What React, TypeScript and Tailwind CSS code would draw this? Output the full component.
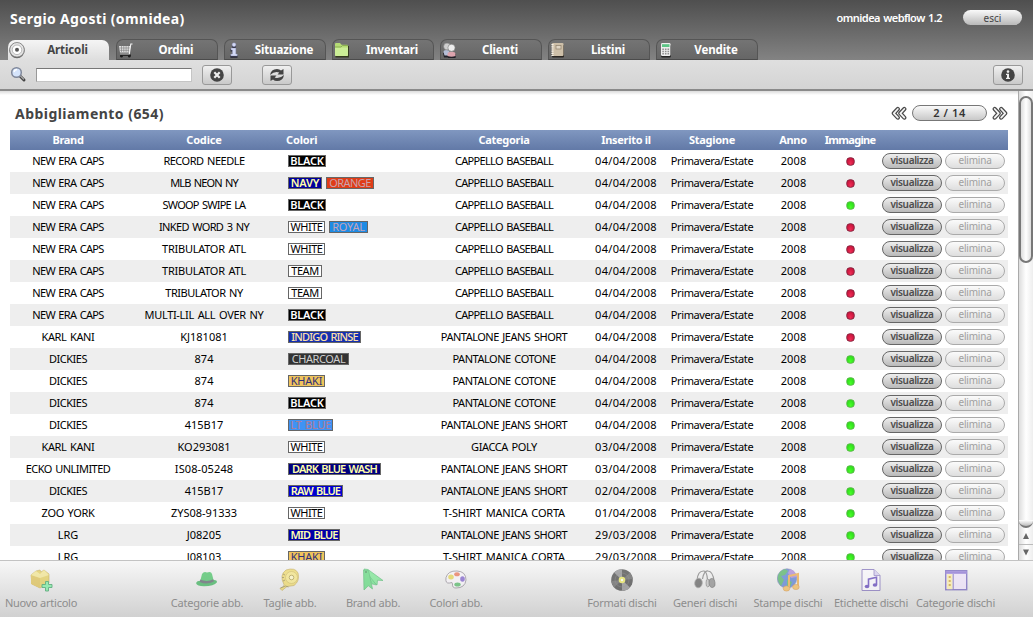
import type { ReactNode } from 'react';

type Tag = [name: string, style: string];

const BLACK: Tag = ['BLACK', 'bg-black text-white font-semibold tracking-[-0.2px] w-[38px]'];
const NAVY: Tag = ['NAVY', 'bg-[#00009c] text-[#ffffa8] font-semibold tracking-[-0.2px] w-[34px]'];
const ORANGE: Tag = ['ORANGE', 'bg-[#e03c17] text-[#c9a3ac] tracking-[-0.55px] w-[48px]'];
const WHITE: Tag = ['WHITE', 'bg-white text-black tracking-[-0.5px] w-[37px]'];
const TEAM: Tag = ['TEAM', 'bg-white text-black tracking-[-0.4px] w-[34px]'];
const ROYAL: Tag = ['ROYAL', 'bg-[#1e8be4] text-[#c6a4b8] tracking-[-0.2px] w-[39px]'];
const INDIGO: Tag = ['INDIGO RINSE', 'bg-[#142fb0] text-[#ffe0a8] font-medium tracking-[-0.85px] w-[73px]'];
const CHARCOAL: Tag = ['CHARCOAL', 'bg-[#333333] text-[#d0d0d0] tracking-[-0.4px] w-[61px]'];
const KHAKI: Tag = ['KHAKI', 'bg-[#f0c45c] text-[#303078] tracking-[-0.2px] w-[37px]'];
const LTBLUE: Tag = ['LT BLUE', 'bg-[#3f93f4] text-[#a87e9c] font-medium tracking-[-0.4px] w-[45px]'];
const DARKBLUE: Tag = ['DARK BLUE WASH', 'bg-[#00007e] text-[#ffffa8] font-semibold tracking-[-0.85px] w-[93px]'];
const RAWBLUE: Tag = ['RAW BLUE', 'bg-[#0000d0] text-[#ffffb0] font-semibold tracking-[-0.85px] w-[55px]'];
const MIDBLUE: Tag = ['MID BLUE', 'bg-[#0000a8] text-[#ffffb0] font-semibold tracking-[-0.85px] w-[52px]'];

type Row = [brand: string, code: string, tags: Tag[], category: string, date: string, ok: boolean];

const BASEBALL = 'CAPPELLO BASEBALL';
const JEANS = 'PANTALONE JEANS SHORT';
const COTONE = 'PANTALONE COTONE';
const TSHIRT = 'T-SHIRT MANICA CORTA';

const rows: Row[] = [
  ['NEW ERA CAPS', 'RECORD NEEDLE', [BLACK], BASEBALL, '04/04/2008', false],
  ['NEW ERA CAPS', 'MLB NEON NY', [NAVY, ORANGE], BASEBALL, '04/04/2008', false],
  ['NEW ERA CAPS', 'SWOOP SWIPE LA', [BLACK], BASEBALL, '04/04/2008', true],
  ['NEW ERA CAPS', 'INKED WORD 3 NY', [WHITE, ROYAL], BASEBALL, '04/04/2008', false],
  ['NEW ERA CAPS', 'TRIBULATOR ATL', [WHITE], BASEBALL, '04/04/2008', false],
  ['NEW ERA CAPS', 'TRIBULATOR ATL', [TEAM], BASEBALL, '04/04/2008', false],
  ['NEW ERA CAPS', 'TRIBULATOR NY', [TEAM], BASEBALL, '04/04/2008', false],
  ['NEW ERA CAPS', 'MULTI-LIL ALL OVER NY', [BLACK], BASEBALL, '04/04/2008', false],
  ['KARL KANI', 'KJ181081', [INDIGO], JEANS, '04/04/2008', false],
  ['DICKIES', '874', [CHARCOAL], COTONE, '04/04/2008', true],
  ['DICKIES', '874', [KHAKI], COTONE, '04/04/2008', true],
  ['DICKIES', '874', [BLACK], COTONE, '04/04/2008', true],
  ['DICKIES', '415B17', [LTBLUE], JEANS, '04/04/2008', true],
  ['KARL KANI', 'KO293081', [WHITE], 'GIACCA POLY', '03/04/2008', true],
  ['ECKO UNLIMITED', 'IS08-05248', [DARKBLUE], JEANS, '03/04/2008', true],
  ['DICKIES', '415B17', [RAWBLUE], JEANS, '02/04/2008', true],
  ['ZOO YORK', 'ZYS08-91333', [WHITE], TSHIRT, '01/04/2008', true],
  ['LRG', 'J08205', [MIDBLUE], JEANS, '29/03/2008', true],
  ['LRG', 'J08103', [KHAKI], TSHIRT, '29/03/2008', true],
];

const tracking: Record<string, string> = {
  [BASEBALL]: 'tracking-[-0.66px]',
  [JEANS]: 'tracking-[-0.5px]',
  [COTONE]: 'tracking-[-0.46px]',
  [TSHIRT]: 'tracking-[-0.2px]',
  'GIACCA POLY': 'tracking-[-0.4px]',
  'NEW ERA CAPS': 'tracking-[-0.68px]',
  'ECKO UNLIMITED': 'tracking-[-0.55px]',
  'KARL KANI': 'tracking-[-0.4px]',
  DICKIES: 'tracking-[-0.5px]',
  'ZOO YORK': 'tracking-[-0.35px]',
  'RECORD NEEDLE': 'tracking-[-0.5px]',
  'MLB NEON NY': 'tracking-[-0.85px]',
  'SWOOP SWIPE LA': 'tracking-[-0.78px]',
  'INKED WORD 3 NY': 'tracking-[-0.65px]',
  'TRIBULATOR ATL': 'tracking-[-0.26px]',
  'TRIBULATOR NY': 'tracking-[-0.5px]',
  'MULTI-LIL ALL OVER NY': 'tracking-[-0.32px]',
  'IS08-05248': 'tracking-[0.1px]',
};

const cols = 'grid grid-cols-[116px_156px_136px_172px_72px_100px_62px_52px_132px] items-center text-center whitespace-nowrap';

function DiscIcon() {
  return (
    <svg width="18" height="18" viewBox="0 0 18 18">
      <circle cx="9" cy="9.6" r="7.6" fill="#666" />
      <circle cx="9" cy="8.8" r="7.3" fill="#e4e4e4" stroke="#777" strokeWidth=".8" />
      <circle cx="9" cy="8.8" r="4.8" fill="#fff" stroke="#aaa" strokeWidth=".8" />
      <circle cx="9" cy="8.8" r="2" fill="#555" />
    </svg>
  );
}

function CartIcon() {
  return (
    <svg width="18" height="18" viewBox="0 0 18 18" fill="none">
      <path d="M2 5h11.500l-1 6.500H3z" fill="#e4e4e4" />
      <path d="M2.500 7h10.500M3 9.300h9.500M4.500 5v6M6.800 5v6M9.100 5v6M11.300 5v6" stroke="#777" strokeWidth=".6" />
      <path d="M15.500 3h-1.700L12.300 13.200H3" stroke="#f4f4f4" strokeWidth="1.100" />
      <path d="M3 14.200h11" stroke="#1b1b1b" strokeWidth="1.300" />
      <circle cx="4.500" cy="15.300" r="1.300" fill="#1b1b1b" />
      <circle cx="12.300" cy="15.300" r="1.300" fill="#1b1b1b" />
    </svg>
  );
}

function InfoLetterIcon() {
  return (
    <svg width="18" height="18" viewBox="0 0 18 18">
      <g fill="#262637" transform="translate(0 1)"><circle cx="9" cy="4" r="2.2" /><path d="M5.600 7h5.100v6h1.800v2.800H5.400V13h1.900V9.600H5.600z" /></g>
      <g fill="#d3d9f6" stroke="#8086a8" strokeWidth=".4"><circle cx="9" cy="3.800" r="2" /><path d="M6 7h4.900v6H12.300v2H5.800v-2h1.500V9H6z" /></g>
    </svg>
  );
}

function FolderIcon() {
  return (
    <svg width="18" height="18" viewBox="0 0 18 18">
      <path d="M2.500 5h13.500v11.500H2.500z" fill="#33391f" />
      <path d="M2 3q0-1 1-1h4l1.500 1.700H14q1 0 1 1V14q0 1-1 1H3q-1 0-1-1z" fill="#b5db75" />
      <path d="M2 6.500h13V14q0 1-1 1H3q-1 0-1-1z" fill="#cbee96" />
      <path d="M2 6h6l1.500-1.500H15" stroke="#7fa347" fill="none" strokeWidth=".8" />
    </svg>
  );
}

function PeopleIcon() {
  return (
    <svg width="18" height="18" viewBox="0 0 18 18">
      <path d="M2 12q4-3 8 0v4.500H3zM6 13q4-3 9 0l-.5 4H7z" fill="#202028" />
      <path d="M2.500 11q0-2 3-2t3 2v3.500h-5z" fill="#b3bdd6" />
      <path d="M6.500 13q0-2.300 4-2.300t4 2.300v2q-4 1.300-8 0z" fill="#dba3ad" />
      <circle cx="6" cy="5.500" r="3.400" fill="#cfcfcf" stroke="#777" strokeWidth=".5" />
      <circle cx="10.500" cy="6.800" r="3.600" fill="#ececec" stroke="#777" strokeWidth=".6" />
    </svg>
  );
}

function NotebookIcon() {
  return (
    <svg width="18" height="18" viewBox="0 0 18 18">
      <rect x="3" y="4" width="12" height="12.500" rx="1" fill="#2b2723" />
      <rect x="3" y="2" width="11.500" height="13" rx="1" fill="#cdbfa8" />
      <rect x="7" y="4.500" width="5" height="3.500" fill="#dfd5c4" stroke="#8d7f6b" strokeWidth=".7" />
      <path d="M3.500 3v12" stroke="#f7f2e8" strokeWidth="2.200" strokeDasharray="1.200 1" />
    </svg>
  );
}

function CalculatorIcon() {
  return (
    <svg width="18" height="18" viewBox="0 0 18 18">
      <rect x="4" y="4" width="10" height="12.500" rx="1.500" fill="#252525" />
      <rect x="4" y="2" width="9.500" height="13" rx="1.200" fill="#eee" />
      <rect x="5" y="3.200" width="7.500" height="2.800" fill="#5cc585" />
      <path d="M5.300 8.200h7.500M5.300 10.500h7.500M5.300 12.800h7.500" stroke="#909090" strokeWidth="1.400" strokeDasharray="1.600 1" />
    </svg>
  );
}

const tabs: [string, ReactNode][] = [
  ['Articoli', <DiscIcon />],
  ['Ordini', <CartIcon />],
  ['Situazione', <InfoLetterIcon />],
  ['Inventari', <FolderIcon />],
  ['Clienti', <PeopleIcon />],
  ['Listini', <NotebookIcon />],
  ['Vendite', <CalculatorIcon />],
];

function NewItemIcon() {
  return (
    <>
      <path d="M2 7l5-4 4-1 1 2 3-2 5 4v9l-9 5-8-4z" fill="#e0c63c" stroke="#b08f1c" strokeWidth=".6" />
      <path d="M2 7l9 3v10l-9-4z" fill="#d9b632" />
      <path d="M2 7l5-4 4 3 4-4 5 5-9 3z" fill="#f3e37b" />
      <path d="M16.500 13.500h3v3h3.500v3h-3.500v3.500h-3v-3.500H13v-3h3.500z" fill="#62ee91" stroke="#0f8a40" strokeWidth=".9" />
    </>
  );
}
function HatIcon() {
  return (
    <>
      <path d="M1 15q1-2.500 5-2.200 6 1.700 12-.7 4-.5 4 2.200-3 4-13 4-7 0-8-3.300z" fill="#17a43c" />
      <path d="M5.500 12L7 6q2-3 5-1.400Q16 3 17 6l1.500 6q-6 4-13 0z" fill="#26b849" />
      <path d="M5.300 11.600q7 3 13-.4l.6 2.200q-7 3.800-14.200.5z" fill="#3c4650" />
    </>
  );
}
function TapeIcon() {
  return (
    <>
      <path d="M8 2q9-3 12 3 2 8-4 12.500l-7 1-5 4-2-2q5-2 4-4Q1 7 8 2z" fill="#edd44c" stroke="#b3922b" strokeWidth=".7" />
      <circle cx="13.500" cy="9.500" r="6" fill="#f6e36c" stroke="#bba02f" strokeWidth=".6" />
      <circle cx="13.500" cy="9.500" r="2.300" fill="#fff7b9" stroke="#96821f" strokeWidth=".9" />
      <path d="M5 6l2 1M4 9.500h2M5 13l2-1M2.500 20l5-2 3 1" stroke="#6e6328" strokeWidth=".8" fill="none" />
    </>
  );
}
function RibbonIcon() {
  return (
    <>
      <path d="M3 1l4 .5 15 11-5.500-.3-.5 4.800L4.500 6z" fill="#5fe57c" stroke="#22a74b" strokeWidth=".7" />
      <path d="M6 5l9.500 12-4.500-1z" fill="#4ede71" stroke="#22a74b" strokeWidth=".6" />
      <path d="M2.500 2l5 .5 4 18.500-4.200-3.200L3 22z" fill="#42d566" stroke="#22a74b" strokeWidth=".7" />
      <circle cx="5" cy="4" r="1" fill="#1c7a35" />
    </>
  );
}
function PaletteIcon() {
  return (
    <>
      <path d="M2 9.500Q4 2.500 13 3q9 .5 9 9-1 8-10 8-4 0-3.500-4 .2-2.500-2.700-1Q1 16 2 9.500z" fill="#f8f4fa" stroke="#77717c" strokeWidth=".9" />
      <ellipse cx="7" cy="9" rx="2.800" ry="2.500" fill="#e0cf32" />
      <ellipse cx="13" cy="6.200" rx="2.800" ry="2" fill="#e85c37" />
      <ellipse cx="18.500" cy="11" rx="2.300" ry="2.800" fill="#6743c4" />
      <ellipse cx="13.500" cy="16.500" rx="3.200" ry="2" fill="#36ad4d" />
    </>
  );
}
function RecordIcon() {
  return (
    <>
      <circle cx="12" cy="12" r="10.800" fill="#222" />
      <path d="M12 12L4 4.500Q7 1.300 12 1.200zM12 12l8 7.500q-3 3.200-8 3.300z" fill="#77777a" />
      <path d="M12 12L4 19.500Q1.500 16 1.200 13zM12 12l8-7.500q2.500 3.500 2.800 6.500z" fill="#444" />
      <circle cx="12" cy="12" r="7" fill="none" stroke="#666" strokeWidth=".4" />
      <circle cx="12" cy="12" r="3.300" fill="#e7e43c" />
      <circle cx="12" cy="12" r="1.200" fill="#fff" />
    </>
  );
}
function HeadphonesIcon() {
  return (
    <>
      <path d="M4 13Q4.500 2.500 11 3q3 .5 3.500 9" fill="none" stroke="#666" strokeWidth="1.200" />
      <path d="M9.500 11Q11 2.500 15 3q5 .5 6 10" fill="none" stroke="#666" strokeWidth="1.200" />
      <ellipse cx="5.500" cy="15" rx="3.800" ry="4.800" fill="#444" stroke="#888" strokeWidth=".7" transform="rotate(8 5.500 15)" />
      <ellipse cx="14.800" cy="15" rx="1.800" ry="4" fill="#bbb" stroke="#555" strokeWidth=".7" />
      <ellipse cx="19" cy="15" rx="3" ry="4.500" fill="#777" stroke="#444" strokeWidth=".7" transform="rotate(-10 19 15)" />
    </>
  );
}
function GlobeIcon() {
  return (
    <>
      <circle cx="11" cy="10.500" r="9.700" fill="#3868cc" stroke="#565b90" strokeWidth=".6" />
      <path d="M2 8q1-5 7-7l3 2-3 4-4 1 3 4-3 6Q1 13 2 8zM11 12l5 2-2 5-3 1z" fill="#2fa548" />
      <path d="M14 1q6 2 7 8l-6 1-3-5z" fill="#9a6dd0" />
      <path d="M13 19V8l9-2v12" fill="none" stroke="#eb9a22" strokeWidth="2" />
      <ellipse cx="10.500" cy="20.500" rx="3.300" ry="2.600" fill="#f2b03d" stroke="#d07a1c" strokeWidth=".6" />
      <ellipse cx="19.900" cy="19" rx="3.300" ry="2.600" fill="#f2b03d" stroke="#d07a1c" strokeWidth=".6" />
    </>
  );
}
function MusicSheetIcon() {
  return (
    <>
      <path d="M3 1.500h12l6 6v15H3z" fill="#fbf9ff" stroke="#6c59b1" />
      <path d="M15 1.500v6h6" fill="#cfc5ef" stroke="#6c59b1" strokeWidth=".8" />
      <path d="M9.500 18v-6.800l8-2v7.500" fill="none" stroke="#4220b0" strokeWidth="1.600" />
      <ellipse cx="8" cy="18.500" rx="2.300" ry="1.800" fill="#4220b0" />
      <ellipse cx="16" cy="17" rx="2.300" ry="1.800" fill="#4220b0" />
    </>
  );
}
function PanelIcon() {
  return (
    <>
      <rect x="1.700" y="2.700" width="21" height="19" fill="#efe1fd" stroke="#5946b2" strokeWidth="1.400" />
      <path d="M1.500 4.500h21.500" stroke="#7457cd" strokeWidth="2.600" />
      <path d="M3 6.200h5.500v15H3z" fill="#ffef9c" />
      <path d="M9.200 6v15.500" stroke="#5946b2" />
      <path d="M5.700 8v11" stroke="#ca9314" strokeWidth="2" strokeDasharray="2 2" />
    </>
  );
}

const shortcuts: ([string, ReactNode] | null)[] = [
  ['Nuovo articolo', <NewItemIcon />],
  null,
  ['Categorie abb.', <HatIcon />],
  ['Taglie abb.', <TapeIcon />],
  ['Brand abb.', <RibbonIcon />],
  ['Colori abb.', <PaletteIcon />],
  null,
  ['Formati dischi', <RecordIcon />],
  ['Generi dischi', <HeadphonesIcon />],
  ['Stampe dischi', <GlobeIcon />],
  ['Etichette dischi', <MusicSheetIcon />],
  ['Categorie dischi', <PanelIcon />],
];

function ToolButton({ children, className }: { children: ReactNode; className: string }) {
  return (
    <button className={`flex h-5 w-[30px] items-center justify-center rounded-[3px] border border-[#999] bg-linear-to-b from-[#f0f0f0] to-[#c9c9c9] ${className}`}>
      {children}
    </button>
  );
}

function Chevrons({ flip = false }: { flip?: boolean }) {
  return (
    <svg width="16" height="15" viewBox="0 0 16 15" className={flip ? '-scale-x-100' : ''} fill="none" strokeLinejoin="round" strokeLinecap="round">
      <path d="M6.800 3L2.800 7.300l4 4.300M13.300 3l-4 4.300 4 4.300" stroke="#4a4a4a" strokeWidth="4.200" />
      <path d="M6.800 3L2.800 7.300l4 4.300M13.300 3l-4 4.300 4 4.300" stroke="#f4f4f4" strokeWidth="1.800" />
    </svg>
  );
}

function Header() {
  return (
    <header className="flex h-[60px] flex-col justify-between bg-linear-to-b from-[#4f4f4f] to-[#838383]">
      <div className="flex h-[37px] items-center pl-[10px] pr-[11px]">
        <h1 className="text-[14px] font-bold tracking-[0.35px] text-white">Sergio Agosti (omnidea)</h1>
        <span className="ml-auto text-[11px] font-semibold tracking-[-0.55px] text-white [word-spacing:1px]">omnidea webflow 1.2</span>
        <button className="-mt-[2px] ml-[21px] h-[15px] w-[59px] rounded-full bg-linear-to-b from-[#fafafa] to-[#b9b9b9] text-[10px] leading-[14px] text-[#444]">esci</button>
      </div>
      <nav className="flex gap-[6px] pl-2">
        {tabs.map(([label, icon], i) => (
          <div
            key={label}
            className={`flex items-center rounded-t-[7px] ${i === 0 ? 'mr-px h-5 w-[101px] self-end bg-linear-to-b from-[#f5f5f5] to-[#dedede] text-[#444]' : 'h-[21px] w-[102px] border border-[#555] border-b-[#4b4b4b] bg-linear-to-b from-[#747474] to-[#666] text-white'}`}
          >
            {icon}
            <span className="flex-1 text-center text-[11.500px] font-bold tracking-[-0.12px]">{label}</span>
          </div>
        ))}
      </nav>
    </header>
  );
}

function Toolbar() {
  return (
    <div className="flex h-[31px] items-center border-b-2 border-[#8a8a8a] bg-linear-to-b from-[#dfdfdf] to-[#d4d4d4] pl-[10px] pr-[10px]">
      <svg width="17" height="17" viewBox="0 0 17 17">
        <path d="M9.500 9.500l4.500 4.500" stroke="#444" strokeWidth="3" strokeLinecap="round" />
        <path d="M10 9.500l3.500 3.500" stroke="#a9a9a9" strokeWidth="1.200" strokeLinecap="round" />
        <circle cx="6.500" cy="6.500" r="4.800" fill="#d5e4fb" stroke="#7f879a" strokeWidth="1.500" />
        <path d="M4 6q.5-2.300 3-2.500" stroke="#fff" fill="none" strokeWidth="1.300" />
      </svg>
      <input aria-label="Cerca" className="ml-[9px] h-[14px] w-[156px] border border-t-[#777] border-r-[#c5c5c5] border-b-[#c5c5c5] border-l-[#999] bg-white" />
      <ToolButton className="ml-[10px]">
        <svg width="14" height="14" viewBox="0 0 14 14"><circle cx="7" cy="7" r="6.800" fill="#444" /><path d="M4.300 4.300l5.400 5.400M9.700 4.300L4.300 9.700" stroke="#eee" strokeWidth="2.200" /></svg>
      </ToolButton>
      <ToolButton className="ml-[30px]">
        <svg width="16" height="14" viewBox="0 0 16 14" fill="#444"><path d="M1 7Q2 1 8 1q2.500 0 4 1.500L14.500 1v5.500H8.500L10.300 4.500Q6 2.500 1 7zM15 7q-1 6-7 6-2.500 0-4-1.500L1.500 13V7.500h6L5.700 9.500Q10 11.500 15 7z" /></svg>
      </ToolButton>
      <ToolButton className="ml-auto">
        <svg width="14" height="14" viewBox="0 0 14 14"><circle cx="7" cy="7" r="6.800" fill="#444" /><circle cx="7" cy="3.600" r="1.300" fill="#eee" /><path d="M5 5.800h3v4h1v1.200H5V9.800h1V7H5z" fill="#eee" /></svg>
      </ToolButton>
    </div>
  );
}

function Listing() {
  return (
    <section className="min-w-0 flex-1 overflow-hidden bg-linear-to-b from-[#dcdcdc] to-white to-[4px] pl-[10px] pr-[10px]">
      <div className="flex h-[39px] items-center pt-[5px] pl-[5px]">
        <h2 className="text-[14px] font-bold tracking-[0.46px] text-[#444]">Abbigliamento (654)</h2>
        <div className="ml-auto flex items-center gap-[5px]">
          <Chevrons />
          <span className="h-4 w-[75px] rounded-full border border-[#777] bg-linear-to-b from-[#fafafa] to-[#c8c8c8] text-center text-[11px] leading-[14px] font-semibold tracking-[0.6px] text-[#333]">2 / 14</span>
          <Chevrons flip />
        </div>
      </div>
      <div className={`${cols} h-5 bg-linear-to-b from-[#8097c0] to-[#6279a7] text-[11px] font-bold tracking-[-0.3px] text-white`}>
        <span>Brand</span>
        <span className="tracking-[-0.15px]">Codice</span>
        <span className="pl-1 text-left tracking-[-0.15px]">Colori</span>
        <span>Categoria</span>
        <span>Inserito il</span>
        <span>Stagione</span>
        <span>Anno</span>
        <span className="tracking-[-0.7px]">Immagine</span>
      </div>
      {rows.map(([brand, code, tags, category, date, ok], i) => (
        <div key={i} className={`${cols} h-[22px] text-[11px] text-black [word-spacing:1.2px] ${i % 2 ? 'bg-[#eee]' : 'bg-white'}`}>
          <span className={tracking[brand]}>{brand}</span>
          <span className={tracking[code]}>{code}</span>
          <span className="flex gap-1 pl-[6px]">
            {tags.map(([name, style]) => (
              <span key={name} className={`h-3 border border-[#666] text-center leading-[10px] ${style}`}>{name}</span>
            ))}
          </span>
          <span className={tracking[category]}>{category}</span>
          <span className="tracking-[0.350px]">{date}</span>
          <span className="tracking-[-0.38px]">Primavera/Estate</span>
          <span className="pl-px tracking-[0.1px]">2008</span>
          <span className="flex justify-center">
            <span className={`size-[9px] rounded-full border ${ok ? 'border-[#5dbb4c] bg-radial-[at_50%_75%] from-[#48ff28] to-[#25cf17]' : 'border-[#8b2843] bg-radial-[at_50%_75%] from-[#f02c55] to-[#b80b32]'}`} />
          </span>
          <span className="flex gap-[3px] pl-[6px] text-[10px] leading-[13px]">
            <span className="h-4 w-[60px] rounded-full border border-[#666] bg-linear-to-b from-[#eee] to-[#b9b9b9] font-semibold tracking-[-0.35px] text-[#4c4c4c]">visualizza</span>
            <span className="h-4 w-[60px] rounded-full border border-[#aaa] bg-linear-to-b from-[#fbfbfb] to-[#dedede] tracking-[-0.2px] text-[#a0a0a0]">elimina</span>
          </span>
        </div>
      ))}
    </section>
  );
}

function Scrollbar() {
  return (
    <div className="flex w-[15px] shrink-0 flex-col border-l border-[#aaa] bg-linear-to-r from-[#ddd] via-white to-[#eee] pt-[5px]">
      <div className="h-[167px] w-[14px] rounded-full border-2 border-[#777] bg-linear-to-r from-[#ddd] via-white to-[#ddd]" />
      <div className="flex-1" />
      <div className="h-[8px] rounded-b-full border-b-2 border-[#777] bg-linear-to-b from-white to-[#bbb]" />
      <svg width="14" height="32" viewBox="0 0 14 32">
        <path d="M0 16.500h14" stroke="#bbb" />
        <path d="M7 5l3 6H4zM7 27.500l3-6H4z" fill="#666" />
      </svg>
    </div>
  );
}

function Footer() {
  return (
    <footer className="flex h-[57px] border-t border-[#c3c3c3] bg-linear-to-b from-[#f7f7f7] to-[#d1d1d1]">
      {shortcuts.map((item, i) => (
        <div key={i} className="flex w-[83px] shrink-0 flex-col items-center whitespace-nowrap pr-px last:w-[86px]">
          {item && (
            <>
              <svg width="24" height="24" viewBox="0 0 24 24" className="mt-[7px] opacity-60">{item[1]}</svg>
              <span className="mt-[3px] text-[11px] leading-4 tracking-[-0.25px] text-[#8d8d8d]">{item[0]}</span>
            </>
          )}
        </div>
      ))}
    </footer>
  );
}

export default function App() {
  return (
    <div className="flex h-[617px] w-[1033px] flex-col overflow-hidden bg-white font-['Noto_Sans','Open_Sans',sans-serif]">
      <Header />
      <Toolbar />
      <main className="flex h-[469px] overflow-hidden">
        <Listing />
        <Scrollbar />
      </main>
      <Footer />
    </div>
  );
}
